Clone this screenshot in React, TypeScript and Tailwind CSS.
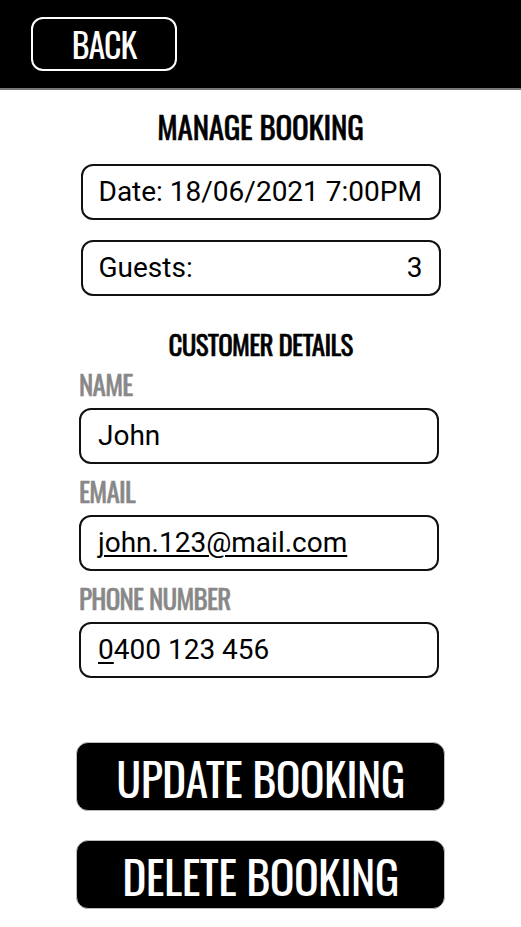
import React from "react";

const oswald = "font-['Oswald','Liberation_Sans_Narrow','DejaVu_Sans_Condensed','Roboto',sans-serif] uppercase";
const heavy = "[-webkit-text-stroke:0.6px_currentColor]";
const body = "font-['Roboto','Liberation_Sans',sans-serif]";

const Field: React.FC<{ label: string; children: React.ReactNode }> = ({ label, children }) => (
   <div className="flex flex-col">
      <span className={`${oswald} ${heavy} text-[27px] leading-[30px] text-[#888] tracking-[-0.7px]`}>{label}</span>
      <div className={`${body} mt-[9px] h-[56px] w-[360px] rounded-[12px] border-2 border-[#111] px-[17px] flex items-center text-[28px] text-black`}>
         {children}
      </div>
   </div>
);

const App: React.FC = (): JSX.Element => (
   <div className="w-[521px] h-[927px] bg-white flex flex-col">
      <div className="h-[90px] bg-black border-b-2 border-[#777] flex items-center px-[31px]">
         <button
            className={`${oswald} w-[146px] h-[54px] rounded-[12px] border-2 border-white text-white text-[34px] leading-none tracking-[-1px]`}
         >
            Back
         </button>
      </div>

      <div className="flex flex-col items-center">
         <h1 className={`${oswald} ${heavy} mt-[18px] text-[31px] leading-[36px] text-black tracking-[-0.2px]`}>Manage Booking</h1>

         <div className={`${body} mt-[20px] h-[56px] w-[360px] rounded-[12px] border-2 border-[#111] px-[16px] flex items-center text-[28px]`}>
            Date: 18/06/2021 7:00PM
         </div>
         <div className={`${body} mt-[20px] h-[56px] w-[360px] rounded-[12px] border-2 border-[#111] px-[16px] flex items-center justify-between text-[28px]`}>
            <span>Guests:</span>
            <span>3</span>
         </div>

         <h2 className={`${oswald} ${heavy} mt-[31px] text-[27px] leading-[34px] text-black tracking-[-0.65px]`}>Customer Details</h2>

         <div className="flex flex-col gap-[12px] mt-[8px] self-start ml-[79px]">
            <Field label="Name">John</Field>
            <Field label="Email">
               <span className="underline underline-offset-[3px] decoration-2">john.123@mail.com</span>
            </Field>
            <Field label="Phone Number">
               <span>
                  <span className="underline underline-offset-[3px] decoration-2">0</span>400 123 456
               </span>
            </Field>
         </div>

         <div className="flex flex-col gap-[29px] mt-[64px]">
            <button
               className={`${oswald} w-[369px] h-[69px] rounded-[12px] bg-black border border-[#bbb] text-white text-[46px] leading-none tracking-[-0.6px]`}
            >
               Update Booking
            </button>
            <button
               className={`${oswald} w-[369px] h-[69px] rounded-[12px] bg-black border border-[#bbb] text-white text-[46px] leading-none tracking-[-0.6px]`}
            >
               Delete Booking
            </button>
         </div>
      </div>
   </div>
);

export default App;
